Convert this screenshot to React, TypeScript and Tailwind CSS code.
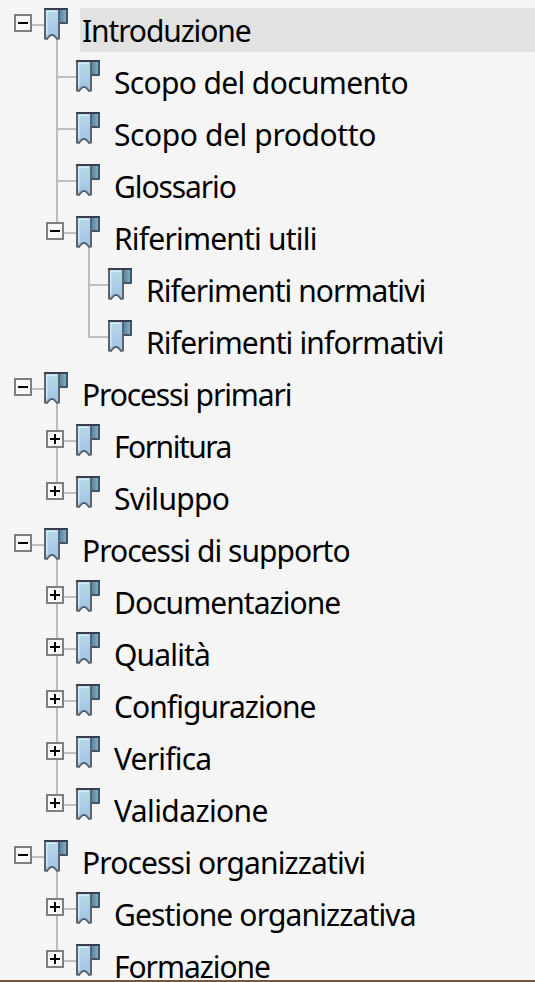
import { Fragment } from 'react';

interface Bookmark {
  title: string;
  tracking: string;
  state?: 'open' | 'closed';
  selected?: boolean;
  children?: Bookmark[];
}

const bookmarks: Bookmark[] = [
  {
    title: 'Introduzione',
    tracking: 'tracking-[-1.12px]',
    state: 'open',
    selected: true,
    children: [
      { title: 'Scopo del documento', tracking: 'tracking-[-0.65px]' },
      { title: 'Scopo del prodotto', tracking: 'tracking-[-0.4px]' },
      { title: 'Glossario', tracking: 'tracking-[-1.1px]' },
      {
        title: 'Riferimenti utili',
        tracking: 'tracking-[-0.8px]',
        state: 'open',
        children: [
          { title: 'Riferimenti normativi', tracking: 'tracking-[-0.95px]' },
          { title: 'Riferimenti informativi', tracking: 'tracking-[-0.85px]' },
        ],
      },
    ],
  },
  {
    title: 'Processi primari',
    tracking: 'tracking-[-1.12px]',
    state: 'open',
    children: [
      { title: 'Fornitura', tracking: 'tracking-[-1.5px]', state: 'closed' },
      { title: 'Sviluppo', tracking: 'tracking-[-0.7px]', state: 'closed' },
    ],
  },
  {
    title: 'Processi di supporto',
    tracking: 'tracking-[-0.97px]',
    state: 'open',
    children: [
      { title: 'Documentazione', tracking: 'tracking-[-0.96px]', state: 'closed' },
      { title: 'Qualità', tracking: 'tracking-[-0.85px]', state: 'closed' },
      { title: 'Configurazione', tracking: 'tracking-[-0.95px]', state: 'closed' },
      { title: 'Verifica', tracking: 'tracking-[-0.8px]', state: 'closed' },
      { title: 'Validazione', tracking: 'tracking-[-0.6px]', state: 'closed' },
    ],
  },
  {
    title: 'Processi organizzativi',
    tracking: 'tracking-[-0.86px]',
    state: 'open',
    children: [
      { title: 'Gestione organizzativa', tracking: 'tracking-[-0.86px]', state: 'closed' },
      { title: 'Formazione', tracking: 'tracking-[-1.05px]', state: 'closed' },
    ],
  },
];

const indents = ['pl-[14px]', 'pl-[46px]', 'pl-[78px]'];

function BookmarkIcon() {
  return (
    <svg width="24" height="32" viewBox="0 0 24 32" className="block shrink-0">
      <defs>
        <linearGradient id="ribbon" x1="0" y1="0" x2="0" y2="1">
          <stop offset="0" stopColor="#b9d9e8" />
          <stop offset="1" stopColor="#a0c2e2" />
        </linearGradient>
        <linearGradient id="fold" x1="0" y1="0" x2="1" y2="0">
          <stop offset="0" stopColor="#548099" />
          <stop offset="1" stopColor="#86b2cf" />
        </linearGradient>
      </defs>
      <path d="M15 1H23V15H15Z" fill="url(#fold)" stroke="#47525e" strokeWidth="2" strokeLinejoin="round" />
      <path
        d="M1 1H15V30.500L13 31L11 28.500L9 27H7L5 28.500L3 31L1 30.500Z"
        fill="url(#ribbon)"
        stroke="#5a6470"
        strokeWidth="2"
        strokeLinejoin="round"
      />
      <path d="M2.800 27V3.300H13" fill="none" stroke="#d8ecf5" strokeWidth="1.2" />
      <path d="M1 1H23" stroke="#34404b" strokeWidth="2" strokeLinecap="round" />
    </svg>
  );
}

function Toggle({ open }: { open: boolean }) {
  return (
    <button className="block size-[18px] shrink-0 border-2 border-[#808080] bg-[#f9f9f9]">
      <svg width="14" height="14" viewBox="0 0 14 14" className="block">
        <path d="M2 7H12" stroke="#000" strokeWidth="2" />
        {!open && <path d="M7 2V12" stroke="#000" strokeWidth="2" />}
      </svg>
    </button>
  );
}

function Row({ item, depth, last }: { item: Bookmark; depth: number; last: boolean }) {
  const open = item.state === 'open';
  return (
    <div className={`flex h-[52px] items-start ${indents[depth]}`}>
      {item.state ? (
        <>
          <div className="flex h-full w-[18px] flex-col">
            <div className={`ml-2.5 h-1.5 w-0.5 shrink-0 ${depth > 0 ? 'bg-[#bdbdbd]' : ''}`} />
            <Toggle open={open} />
            {depth > 0 && !last && <div className="ml-2.5 w-0.5 flex-1 bg-[#bdbdbd]" />}
          </div>
          <div className="mt-4 h-0.5 w-3 bg-[#bdbdbd]" />
        </>
      ) : (
        <>
          <div className={`ml-2.5 w-0.5 bg-[#bdbdbd] ${last ? 'h-[18px]' : 'h-full'}`} />
          <div className="mt-4 h-0.5 w-[18px] bg-[#bdbdbd]" />
        </>
      )}
      <div className="flex h-full flex-col">
        <BookmarkIcon />
        {open && <div className="ml-3 w-0.5 flex-1 bg-[#bdbdbd]" />}
      </div>
      <div
        className={`ml-3 h-11 flex-1 pt-[9px] pl-0.5 text-[30px] leading-[28px] font-[370] whitespace-nowrap ${item.tracking} ${
          item.selected ? 'bg-[#e2e2e2]' : ''
        }`}
      >
        {item.title}
      </div>
    </div>
  );
}

function Tree({ items, depth = 0 }: { items: Bookmark[]; depth?: number }) {
  return (
    <>
      {items.map((item, i) => (
        <Fragment key={item.title}>
          <Row item={item} depth={depth} last={i === items.length - 1} />
          {item.children && <Tree items={item.children} depth={depth + 1} />}
        </Fragment>
      ))}
    </>
  );
}

export default function App() {
  return (
    <div className="h-[982px] w-[535px] overflow-hidden border-b-2 border-[#79553a] bg-[#f5f5f5] pt-2 font-['Noto_Sans',sans-serif] text-black">
      <Tree items={bookmarks} />
    </div>
  );
}
